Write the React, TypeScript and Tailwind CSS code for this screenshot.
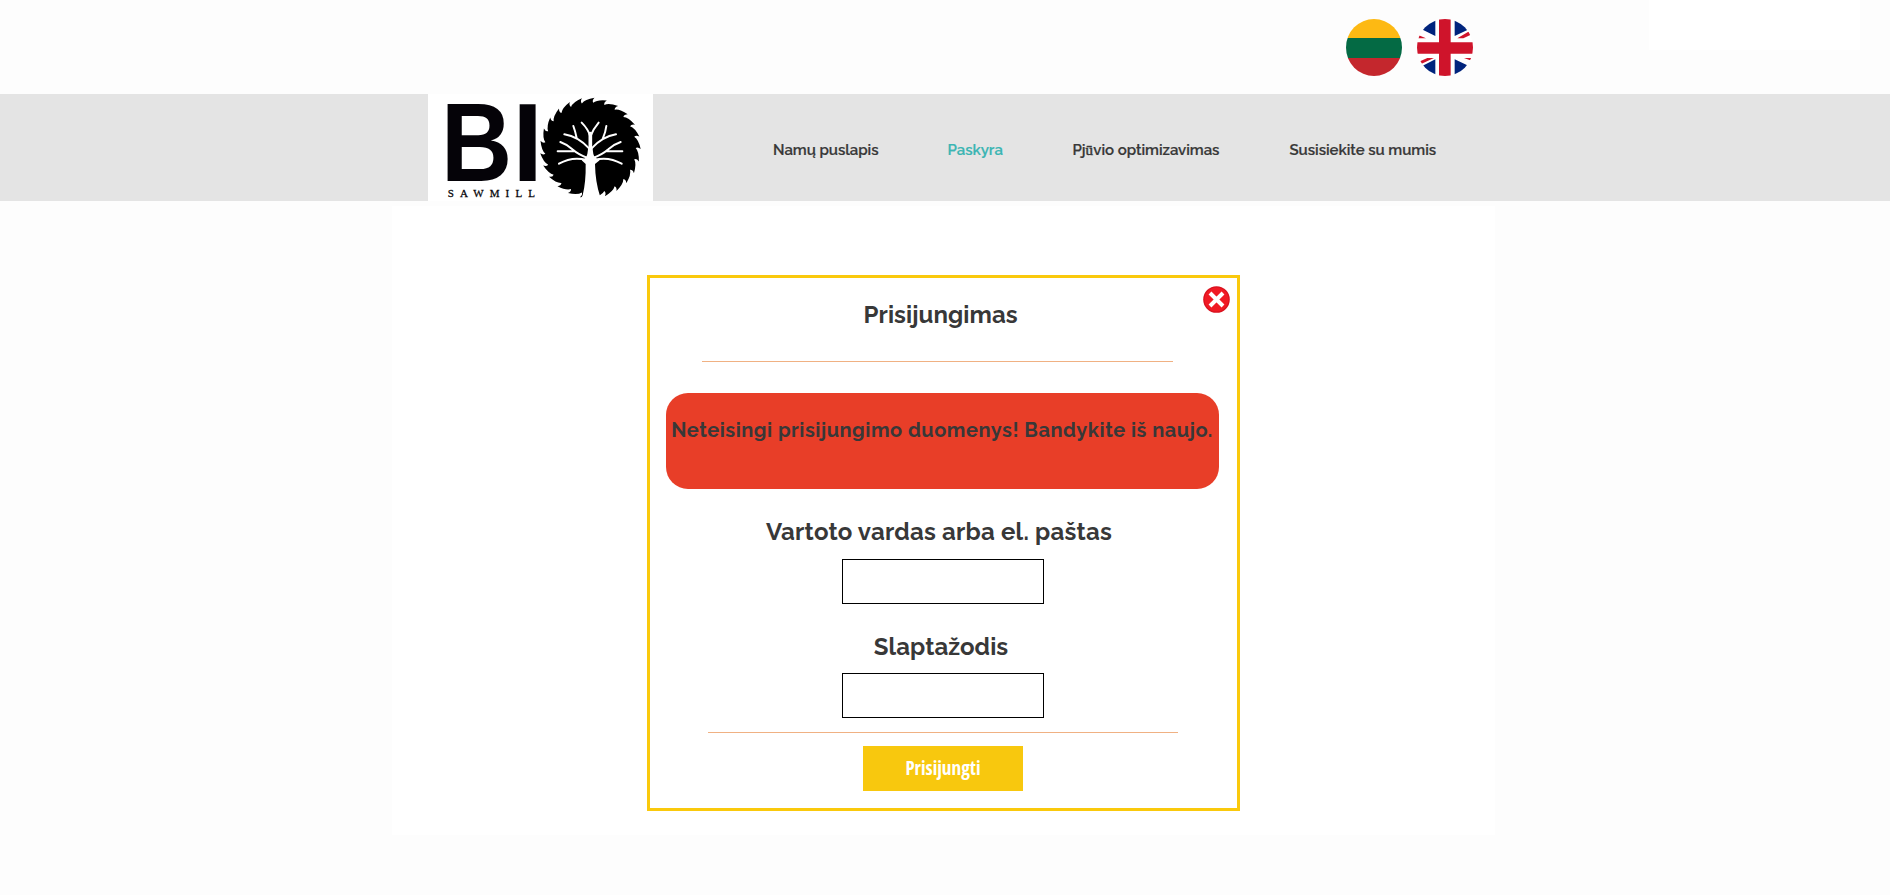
import type { ReactNode } from "react";

const TEETH = 25;

function sawPath(cx: number, cy: number, inner: number, outer: number) {
  const pitch = (Math.PI * 2) / TEETH;
  const at = (r: number, a: number) => `${(cx + r * Math.cos(a)).toFixed(1)} ${(cy + r * Math.sin(a)).toFixed(1)}`;
  let d = `M${at(inner, 0)}`;
  for (let i = 0; i < TEETH; i++) {
    const a = i * pitch;
    d += `Q${at(outer - 4, a + pitch * 0.3)} ${at(outer, a + pitch * 1.08)}`;
    d += `Q${at(inner + 7, a + pitch * 0.88)} ${at(inner, a + pitch)}`;
  }
  return d + "Z";
}

function Logo() {
  return (
    <svg viewBox="24 27 675 321" className="h-[107px] w-[225px] overflow-visible bg-white" role="img">
      <g fill="#050308">
        <text transform="translate(63 287) scale(0.89 1)" fontSize="332" className="font-['Liberation_Sans',sans-serif] font-bold">B</text>
        <text x="277" y="287" fontSize="332" className="font-['Liberation_Sans',sans-serif] font-bold">I</text>
        <text x="83" y="335" fontSize="33" textLength="262" stroke="#050308" strokeWidth="0.8" className="font-['Liberation_Serif',serif]">SAWMILL</text>
      </g>
      <path d={sawPath(511, 189, 136, 151)} fill="#000" />
      <g transform="translate(345 21)" stroke="#fff" fill="none" strokeLinecap="round" strokeWidth="6">
        <path d="M157 186Q154 200 140 205L152 216Q153 270 143 310L134 326H204L195 312Q181 270 180 216L194 205Q178 198 175 186L172 165H160Z" fill="#fff" stroke="none" />
        <path d="M166 190V125" strokeWidth="11" />
        <path d="M166 134Q160 112 140 92M166 134Q174 112 191 92" />
        <path d="M163 170Q130 134 88 127M125 138Q121 118 115 102" />
        <path d="M169 170Q202 134 243 127M203 141Q212 120 214 102" />
        <path d="M158 198Q130 188 112 172Q96 157 76 150M118 178H68" />
        <path d="M174 198Q202 188 220 172Q236 157 257 150M214 178H262" />
        <path d="M155 204Q112 192 72 215M177 204Q220 192 260 215" />
      </g>
    </svg>
  );
}

function FlagLt() {
  return (
    <svg viewBox="0 0 56 57" className="h-[57px] w-14" role="img">
      <clipPath id="lt"><ellipse cx="28" cy="28.5" rx="28" ry="28.5" /></clipPath>
      <g clipPath="url(#lt)">
        <path d="M0 0H56V19H0Z" fill="#fdb913" />
        <path d="M0 19H56V39H0Z" fill="#046a44" />
        <path d="M0 39H56V57H0Z" fill="#c4272d" />
      </g>
    </svg>
  );
}

function FlagUk() {
  return (
    <svg viewBox="291 57 168 171" className="h-[57px] w-14" role="img">
      <clipPath id="uk"><ellipse cx="375" cy="142.5" rx="84" ry="85.5" /></clipPath>
      <g clipPath="url(#uk)">
        <path d="M280 50H470V235H280Z" fill="#fff" />
        <path d="M346 50V108L308 89L300 50ZM404 50V108L442 90L450 50ZM346 235V178L308 197L300 235ZM404 235V178L442 196L450 235Z" fill="#00247d" />
        <path d="M357 50H392V127H470V161H392V235H357V161H280V127H357ZM290 103L318 115H290ZM412 115H430L460 101L445 95ZM342 174H322L295 186L305 191ZM432 174H460V184Z" fill="#cf142b" />
      </g>
    </svg>
  );
}

function CloseIcon() {
  return (
    <svg viewBox="0 0 27 27" className="size-[27px]">
      <circle cx="13.5" cy="13.5" r="13.3" fill="#d9121f" />
      <circle cx="13.5" cy="13.5" r="12" fill="#f01a24" />
      <path d="M7 7L20 20M20 7L7 20" stroke="#fff" strokeWidth="4" />
    </svg>
  );
}

function Label({ children, className }: { children: ReactNode; className: string }) {
  return <label className={`block text-center text-2xl leading-8 font-bold whitespace-nowrap ${className}`}>{children}</label>;
}

export default function App() {
  return (
    <div className="h-[895px] w-[1890px] overflow-hidden bg-[#fdfdfd] font-['Raleway','Lato',sans-serif] text-[#383838]">
      <div className="flex h-[94px] items-start">
        <div className="ml-[1346px] flex gap-[15px] pt-[19px]">
          <FlagLt />
          <FlagUk />
        </div>
        <div className="ml-[176px] h-[50px] w-[211px] bg-white" />
      </div>

      <header className="flex h-[107px] items-center bg-[#e4e4e4] pl-[428px]">
        <Logo />
        <nav className="ml-[120px] flex pt-[5px] text-[15px] leading-6 font-semibold tracking-[-0.03px] whitespace-nowrap [-webkit-text-stroke:0.2px]">
          <a className="w-[174.5px]">Namų puslapis</a>
          <a className="w-[125px] text-[#3bb5b3]">Paskyra</a>
          <a className="w-[217px]">
            Pj<span className="font-['Liberation_Serif',serif] font-normal tracking-[0.3px] [-webkit-text-stroke:0.5px]">ū</span>vio optimizavimas
          </a>
          <a>Susisiekite su mumis</a>
        </nav>
      </header>

      <main className="mt-[5px] ml-[392px] h-[629px] w-[1103px] bg-white pt-[69px] pl-[255px]">
        <form className="relative h-[536px] w-[593px] border-3 border-[#fac90c] bg-white">
          <button type="button" className="absolute top-2 right-[7px]"><CloseIcon /></button>
          <h1 className="mt-[21px] ml-[213.5px] text-2xl leading-8 font-bold tracking-[0.08px]">Prisijungimas</h1>
          <hr className="mt-[30px] ml-[52px] w-[471px] border-[#f0b183]" />
          <div className="mt-[31px] ml-4 h-24 w-[553px] rounded-[22px] bg-[#e83e28] pt-[22px] pr-px text-center text-xl leading-[30px] font-bold tracking-[0.5px] whitespace-nowrap">
            Neteisingi prisijungimo duomenys! Bandykite iš naujo.
          </div>
          <Label className="mt-[27px] mr-[9px] tracking-[0.22px]">
            Vartoto vardas arba el. paštas
          </Label>
          <input className="mt-[11px] ml-[192px] block h-[45px] w-[202px] border border-black bg-white px-2" />
          <Label className="mt-[27px] mr-[5px] tracking-[0.08px]">
            Slaptažodis
          </Label>
          <input type="password" className="mt-[10px] ml-[192px] block h-[45px] w-[202px] border border-black bg-white px-2" />
          <hr className="mt-[14px] ml-[58px] w-[470px] border-[#f0b183]" />
          <button type="button" className="mt-[13px] ml-[213px] block h-[45px] w-40 bg-[#f8c80e] font-['Open_Sans_Condensed','Open_Sans',sans-serif] text-[19px] leading-[45px] font-bold text-white [font-stretch:75%]">
            Prisijungti
          </button>
        </form>
      </main>
    </div>
  );
}
